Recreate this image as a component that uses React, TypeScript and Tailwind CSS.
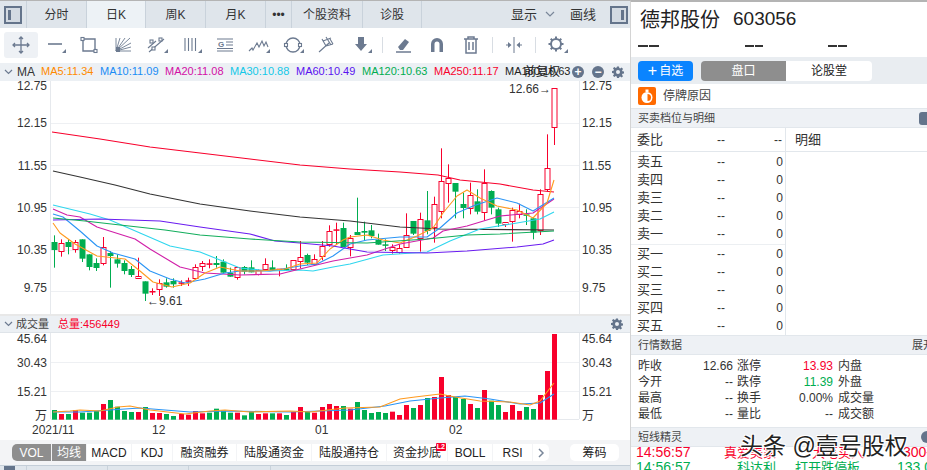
import type { ReactNode } from 'react';

type Kind = 'g' | 'h' | 'r';
type Candle = [number, number, number, number, Kind];

const RED = '#f8002c';
const GREEN = '#00ad50';

// high, body top, body bottom, low: first part read off the lower-left crop
const leftCandles: Candle[] = [
  [193, 213, 237, 290, 'g'], [205, 217, 242, 257, 'h'], [205, 213, 228, 250, 'g'], [207, 214, 236, 245, 'h'],
  [205, 205, 263, 273, 'g'], [250, 250, 288, 298, 'g'], [262, 276, 291, 300, 'g'], [198, 227, 275, 283, 'h'],
  [240, 246, 255, 350, 'g'], [250, 265, 278, 290, 'g'], [268, 276, 300, 310, 'g'], [285, 294, 312, 318, 'g'],
  [260, 316, 323, 323, 'h'], [331, 331, 368, 390, 'g'], [352, 360, 364, 372, 'r'], [325, 337, 356, 375, 'h'],
  [322, 334, 347, 350, 'g'], [322, 330, 340, 350, 'g'], [328, 334, 338, 345, 'r'], [320, 328, 332, 345, 'r'],
  [280, 289, 323, 323, 'h'], [270, 277, 287, 300, 'h'], [265, 277, 280, 292, 'r'], [255, 276, 282, 290, 'g'],
  [265, 272, 305, 305, 'g'], [290, 305, 317, 317, 'g'], [288, 289, 320, 326, 'h'], [285, 288, 302, 310, 'g'],
  [268, 289, 304, 304, 'g'], [295, 296, 307, 313, 'h'], [262, 280, 295, 300, 'h'], [268, 289, 297, 300, 'g'],
  [295, 293, 297, 316, 'r'], [280, 293, 297, 300, 'g'], [268, 268, 296, 296, 'h'],
];

const rightCandles: Candle[] = [
  [480, 528, 540, 562, 'h'], [518, 522, 545, 552, 'g'], [520, 533, 547, 552, 'h'], [480, 494, 524, 538, 'h'],
  [433, 451, 490, 497, 'h'], [425, 445, 449, 490, 'r'], [425, 441, 498, 498, 'g'], [462, 470, 497, 526, 'h'],
  [350, 453, 462, 462, 'g'], [422, 450, 455, 478, 'g'], [432, 448, 465, 472, 'g'], [458, 476, 491, 491, 'g'],
  [475, 490, 494, 510, 'g'], [490, 497, 507, 518, 'h'], [490, 501, 512, 518, 'h'], [397, 463, 500, 500, 'h'],
  [420, 420, 458, 462, 'g'], [395, 415, 473, 512, 'h'], [330, 418, 450, 460, 'g'], [347, 370, 440, 485, 'h'],
  [202, 301, 392, 412, 'h'], [250, 290, 305, 365, 'h'], [306, 306, 332, 412, 'g'], [335, 369, 381, 412, 'g'],
  [305, 343, 383, 400, 'h'], [325, 361, 392, 400, 'g'], [265, 306, 392, 418, 'h'], [328, 330, 380, 400, 'g'],
  [380, 385, 428, 438, 'g'], [424, 424, 430, 438, 'h'], [380, 388, 421, 482, 'h'], [368, 391, 400, 412, 'h'],
  [385, 400, 401, 432, 'g'], [412, 412, 455, 475, 'g'], [325, 338, 445, 462, 'h'], [160, 262, 326, 332, 'h'],
  [22, 22, 139, 192, 'h'],
];

const candles: Candle[] = [
  ...leftCandles.map((c): Candle => [170 + c[0] / 3, 170 + c[1] / 3, 170 + c[2] / 3, 170 + c[3] / 3, c[4]]),
  ...rightCandles.map((c): Candle => [80 + c[0] / 3, 80 + c[1] / 3, 80 + c[2] / 3, 80 + c[3] / 3, c[4]]),
];

const vols: [number, 'r' | 'g'][] = [
  [300, 'g'], [312, 'r'], [312, 'g'], [300, 'r'], [308, 'g'], [308, 'g'], [303, 'g'], [282, 'r'], [270, 'g'], [290, 'g'],
  [303, 'g'], [306, 'g'], [306, 'r'], [291, 'g'], [309, 'r'], [309, 'r'], [312, 'g'], [318, 'g'], [312, 'r'], [314, 'r'],
  [303, 'r'], [310, 'r'], [308, 'g'], [296, 'g'], [302, 'g'], [308, 'g'], [308, 'r'], [316, 'g'], [305, 'g'], [312, 'r'],
  [310, 'r'], [310, 'g'], [310, 'r'], [315, 'g'], [306, 'r'], [291, 'r'], [306, 'g'], [308, 'r'], [291, 'r'], [282, 'r'],
  [288, 'r'], [288, 'g'], [296, 'r'], [276, 'g'], [300, 'g'], [309, 'g'], [306, 'g'], [309, 'g'], [305, 'r'], [315, 'r'],
  [285, 'r'], [294, 'g'], [285, 'r'], [264, 'g'], [261, 'r'], [201, 'r'], [255, 'r'], [261, 'g'], [267, 'g'], [282, 'r'],
  [294, 'g'], [240, 'r'], [272, 'g'], [285, 'g'], [306, 'r'], [285, 'r'], [303, 'r'], [291, 'g'], [297, 'g'], [255, 'r'],
  [183, 'r'], [72, 'r'],
];

const maLines: { color: string; pts: string }[] = [
  { color: '#f8002c', pts: '52,131 100,138 150,146 200,152 250,158 300,164 350,168 400,171 438,174 460,179 500,183 533,189 554,191' },
  { color: '#333333', pts: '53,170 80,176 115,184 150,193 200,203 250,210 300,216 350,220 400,226 440,228 554,229' },
  { color: '#2fd6ee', pts: '53,204 90,213 110,219 140,232 170,245 200,251 220,259 240,267 270,270 300,269 313,270 333,266 350,263 383,254 427,251 450,240 480,228 517,222 540,218 554,211' },
  { color: '#d01fa8', pts: '53,208 67,214 80,216 97,226 135,238 150,248 170,260 180,266 205,272 240,274 280,273 300,268 333,260 367,254 400,243 433,237 443,230 467,225 500,215 533,212 554,198' },
  { color: '#2b95f5', pts: '53,213 63,216 80,230 97,245 113,252 135,258 150,270 170,278 185,282 205,278 225,272 240,270 270,270 300,265 317,263 333,255 350,243 367,239 400,236 427,236 440,227 457,212 473,205 497,197 517,202 533,210 554,197' },
  { color: '#ff9a1f', pts: '53,222 60,232 75,243 97,255 125,258 140,270 153,281 172,286 190,282 205,272 220,266 240,270 260,270 285,268 300,263 317,262 330,248 343,239 350,236 367,234 383,239 400,242 417,235 433,227 443,212 457,195 467,189 480,197 497,205 517,209 533,217 547,202 554,179' },
  { color: '#6a1cf0', pts: '53,219 100,218 160,220 200,226 250,233 275,240 300,242 333,245 367,251 427,252 467,250 517,246 543,243 554,239' },
  { color: '#12ad5c', pts: '53,217 85,220 120,224 165,229 200,234 250,238 300,241 367,242 427,238 467,234 500,233 554,230' },
];

const legend: [string, string, string][] = [
  ['MA5:11.34', 'text-[#ff8a00]', 'w-[59px]'],
  ['MA10:11.09', 'text-[#1a8cf5]', 'w-[65px]'],
  ['MA20:11.08', 'text-[#d30fa5]', 'w-[65px]'],
  ['MA30:10.88', 'text-[#12c8e8]', 'w-[66px]'],
  ['MA60:10.49', 'text-[#5a12f0]', 'w-[66px]'],
  ['MA120:10.63', 'text-[#00ad50]', 'w-[72px]'],
  ['MA250:11.17', 'text-[#f8002c]', 'w-[71px]'],
];

const cx = (i: number) => Math.round(53.6 + 7.05 * i) + 0.5;

function Chevron() {
  return (
    <svg width="9" height="6" viewBox="0 0 9 6" className="shrink-0">
      <path d="M1 1l3.5 3.5L8 1" fill="none" stroke="#6c7a90" strokeWidth="1.2" />
    </svg>
  );
}

function PanelIcon({ flip }: { flip?: boolean }) {
  return (
    <svg width="18" height="18" viewBox="0 0 18 18">
      <rect x="1" y="1" width="16" height="16" fill="#d3dae2" stroke="#64748b" strokeWidth="2" />
      <rect x={flip ? 11 : 4} y="4" width="3" height="10" fill="#64748b" />
    </svg>
  );
}

function Gear({ size = 13 }: { size?: number }) {
  return (
    <svg width={size} height={size} viewBox="0 0 24 24">
      <path
        fill="#64748b"
        fillRule="evenodd"
        d="M10 1h4l.6 3.2 2 .8L19.3 3l2.8 2.8-2 2.7.8 2 3.1.5v4l-3.2.6-.8 2 2 2.7-2.8 2.8-2.7-2-2 .8L14 24h-4l-.6-3.1-2-.8-2.7 2L1.900 19.300l2-2.700-.8-2L0 14v-4l3.100-.6.8-2-2-2.700L4.700 2l2.700 2 2-.8zM12 8a4 4 0 100 8 4 4 0 000-8z"
      />
    </svg>
  );
}

function Tool({ children, corner, active }: { children: ReactNode; corner?: boolean; active?: boolean }) {
  return (
    <div className={`flex h-[26px] w-[34px] shrink-0 items-center justify-center rounded-[3px] ${active ? 'bg-[#eef1f5]' : ''}`}>
      <svg width="30" height="22" viewBox="0 0 30 22" fill="none" stroke="#6c7a90" strokeWidth="1.1">
        {children}
        {corner && <path d="M26 19h-4l4-4z" fill="#6c7a90" stroke="none" />}
      </svg>
    </div>
  );
}

function Toolbar() {
  const sep = <div className="h-[16px] w-px shrink-0 bg-[#d8dde3]" />;
  return (
    <div className="flex h-[35px] items-center bg-white pl-1">
      <Tool active>
        <path d="M15 3v16M7 11h16M13 5l2-2 2 2M13 17l2 2 2-2M9 9l-2 2 2 2M21 9l2 2-2 2" strokeWidth="1.3" />
      </Tool>
      <Tool corner><path d="M8 10h14" strokeWidth="1.6" /></Tool>
      <Tool>
        <path d="M9 5v12h12V5z" strokeWidth="1.4" />
        <rect x="7" y="3.500" width="3" height="3" fill="#fff" />
        <rect x="20" y="15.500" width="3" height="3" fill="#fff" />
      </Tool>
      <Tool>
        <path d="M8 17L22 4M8 17l15-8M8 17l15-4M8 17h15M8 17L17 4M8 17L12 4M8 17V4" strokeWidth="0.9" />
        <path d="M8 13h4v5H8z" fill="#6c7a90" stroke="none" />
      </Tool>
      <Tool corner>
        <path d="M7 18L22 5M6 14L14 7" />
        <rect x="10" y="13" width="3" height="3" fill="#fff" />
        <rect x="17" y="4" width="3" height="3" fill="#fff" />
        <rect x="8" y="6" width="3" height="3" fill="#fff" />
      </Tool>
      <Tool corner>
        <path d="M9 4v13M12.500 4v13M16 4v13M19.500 4v13" />
      </Tool>
      <Tool>
        <path d="M7 5h16M7 17h16M7 14.500h16M16 8h7M16 11h7" />
        <text x="8" y="12.500" fontSize="8" fontWeight="700" fill="#6c7a90" stroke="none">G</text>
      </Tool>
      <Tool corner>
        <path d="M5 17l3-3 1 2 4-7 2 4 3-6 2 5 2-4 2 5" />
      </Tool>
      <Tool corner>
        <circle cx="15" cy="11" r="7" strokeWidth="1.3" />
        <rect x="6.500" y="9.500" width="3" height="3" fill="#fff" />
        <rect x="20.500" y="9.500" width="3" height="3" fill="#fff" />
      </Tool>
      <Tool>
        <path d="M7 18L17 9M10 5l4 7M14 3l5 8M18 5l3 5M11 7l8-3M14 12l7-2" />
      </Tool>
      <Tool corner>
        <path d="M12 3h6v7h3l-6 7-6-7h3z" fill="#6c7a90" stroke="none" />
      </Tool>
      <div className="ml-1 mr-[3px]">{sep}</div>
      <Tool>
        <path d="M10 13l7-8 4 3-6 8h-3z" fill="#6c7a90" stroke="none" />
        <path d="M8 18h15" strokeWidth="1.500" />
      </Tool>
      <Tool>
        <path d="M9 18v-8a6 6 0 0112 0v8h-3.500v-8a2.500 2.500 0 00-5 0v8z" fill="#6c7a90" stroke="none" />
      </Tool>
      <Tool>
        <path d="M8 5h14M12 5V3h6v2M10 5v14h10V5M13 8v8M17 8v8" strokeWidth="1.500" />
      </Tool>
      <div className="ml-1 mr-1">{sep}</div>
      <Tool>
        <path d="M15 3v16" strokeWidth="1" />
        <path d="M12.500 11L9 8v6zM17.500 11L21 8v6z" fill="#6c7a90" stroke="none" />
        <path d="M7 11h2M21 11h2" />
      </Tool>
      <div className="ml-1 mr-1">{sep}</div>
      <Tool corner>
        <circle cx="14" cy="10" r="5" strokeWidth="2" />
        <path d="M14 2.500v2.500M14 15v2.500M6.500 10H9M19 10h2.500M8.700 4.700l1.800 1.800M17.500 13.500l1.800 1.800M19.300 4.700l-1.800 1.800M10.500 13.500l-1.800 1.800" strokeWidth="2" />
      </Tool>
    </div>
  );
}

function TopTabs() {
  const tabs: [string, string, boolean?][] = [
    ['分时', 'w-[60px]'],
    ['日K', 'w-[59px]', true],
    ['周K', 'w-[60px]'],
    ['月K', 'w-[60px]'],
    ['•••', 'w-[26px]'],
    ['个股资料', 'w-[71px]'],
    ['诊股', 'w-[59px]'],
  ];
  return (
    <div className="flex h-[27px] items-stretch bg-[#dfe5eb] text-[12px] text-[#333]">
      <div className="flex w-[27px] shrink-0 items-center justify-center border-r border-[#c9d2db]">
        <PanelIcon />
      </div>
      {tabs.map(([label, w, on]) => (
        <div key={label} className={`flex shrink-0 items-center justify-center border-r border-[#c9d2db] ${w} ${on ? 'bg-[#edf2f6]' : ''}`}>
          {label}
        </div>
      ))}
      <div className="flex flex-1 items-center justify-end pr-[2px] text-[13px]">
        <span>显示</span>
        <svg width="10" height="7" viewBox="0 0 10 7" className="ml-[8px] mr-[15px]">
          <path d="M1 1l4 4 4-4" fill="none" stroke="#7a879a" strokeWidth="1.200" />
        </svg>
        <span className="mr-[14px]">画线</span>
        <PanelIcon flip />
      </div>
    </div>
  );
}

function PriceChart() {
  const grids: [number, string][] = [[122.5, '12.15'], [164.5, '11.55'], [206.5, '10.95'], [249.5, '10.35'], [290.5, '9.75']];
  const labelY: Record<string, number> = { '12.15': 126, '11.55': 169, '10.95': 211, '10.35': 253, '9.75': 291 };
  return (
    <svg width="630" height="233" viewBox="0 80 630 233" className="block overflow-visible" fontSize="12" fill="#333">
      {grids.map(([y]) => (
        <line key={y} x1="51" x2="579" y1={y} y2={y} stroke="#eef0f3" />
      ))}
      <line x1="50.500" x2="50.500" y1="80" y2="313" stroke="#e6e9ed" />
      <line x1="579.500" x2="579.500" y1="80" y2="313" stroke="#e6e9ed" />
      {[...grids.map(([, l]) => l), '12.75'].map((l) => {
        const y = l === '12.75' ? 89 : labelY[l];
        return (
          <g key={l}>
            <text x="47" y={y} textAnchor="end">{l}</text>
            <text x="582" y={y}>{l}</text>
          </g>
        );
      })}
      {candles.map(([hi, top, bot, lo, kind], i) => {
        const x = cx(i);
        const color = kind === 'g' ? GREEN : RED;
        return (
          <g key={i}>
            <line x1={x} x2={x} y1={hi} y2={lo} stroke={color} strokeWidth="1" />
            {kind === 'h' ? (
              <rect x={x - 2.5} y={Math.round(top) + 0.5} width="5" height={Math.max(1, Math.round(bot - top))} fill="#fff" stroke={color} />
            ) : (
              <rect x={x - 3} y={top} width="6" height={Math.max(1.5, bot - top)} fill={color} />
            )}
          </g>
        );
      })}
      {maLines.map((m) => (
        <polyline key={m.color} points={m.pts} fill="none" stroke={m.color} strokeWidth="1.100" strokeLinejoin="round" />
      ))}
      <text x="509" y="92">12.66→</text>
      <text x="147" y="304">←9.61</text>
    </svg>
  );
}

function VolumeChart() {
  const axis: [number, string, number][] = [[362.5, '30.43', 367], [391.5, '15.21', 396]];
  const fast = '53,412 70,411 80,410 100,411 118,407 130,406 150,410 185,414 210,411 225,410 250,412 290,411 310,412 345,408 380,407 400,399 415,397 440,394 455,397 480,401 510,402 530,405 540,401 554,383';
  const slow = '53,412 80,412 110,410 140,408 165,410 190,412 230,411 290,412 350,410 385,406 410,401 440,398 465,396 490,399 520,404 540,403 554,394';
  return (
    <svg width="630" height="107" viewBox="0 333 630 107" className="block overflow-visible" fontSize="12" fill="#333">
      {axis.map(([y]) => (
        <line key={y} x1="51" x2="579" y1={y} y2={y} stroke="#eef0f3" />
      ))}
      <line x1="50.500" x2="50.500" y1="333" y2="419" stroke="#e6e9ed" />
      <line x1="579.500" x2="579.500" y1="333" y2="419" stroke="#e6e9ed" />
      <line x1="51" x2="579" y1="419.500" y2="419.500" stroke="#e6e9ed" />
      {vols.map(([top, dir], i) => (
        <rect key={i} x={cx(i) - 2.5} y={310 + top / 3} width="5" height={(329 - top) / 3} fill={dir === 'r' ? RED : GREEN} />
      ))}
      <polyline points={slow} fill="none" stroke="#2b95f5" strokeWidth="1.100" />
      <polyline points={fast} fill="none" stroke="#ff9a1f" strokeWidth="1.100" />
      {[[343, '45.64'], ...axis.map((a) => [a[2], a[1]])].map(([y, l]) => (
        <g key={l as string}>
          <text x="47" y={y} textAnchor="end">{l}</text>
          <text x="582" y={y}>{l}</text>
        </g>
      ))}
      <text x="47" y="420" textAnchor="end">万</text>
      <text x="582" y="420">万</text>
      <text x="32" y="434">2021/11</text>
      <text x="152" y="434">12</text>
      <text x="315" y="434">01</text>
      <text x="449" y="434">02</text>
    </svg>
  );
}

function IndicatorTabs() {
  const tabs: [string, string][] = [
    ['MACD', 'w-[44px]'], ['KDJ', 'w-[40px]'], ['融资融券', 'w-[63px]'], ['陆股通资金', 'w-[74px]'], ['陆股通持仓', 'w-[74px]'],
  ];
  return (
    <div className="flex h-[25px] items-start bg-[#f3f4f6] pl-3 pt-[4px] text-[12px] text-[#222]">
      <div className="flex h-[17px] w-[39px] items-center justify-center rounded-l-[5px] bg-[#8e8e8e] text-white">VOL</div>
      <div className="ml-px flex h-[17px] w-[34px] items-center justify-center bg-[#8e8e8e] text-white">均线</div>
      {tabs.map(([t, w]) => (
        <div key={t} className={`ml-px flex h-[17px] items-center justify-center bg-white ${w}`}>{t}</div>
      ))}
      <div className="relative ml-px flex h-[17px] w-[60px] items-center justify-center bg-white">
        资金抄底
        <span className="absolute right-[1px] top-[-1px] h-[8px] rounded-[1px] bg-[#f8002c] px-[1px] text-[7px] font-bold leading-[8px] text-white">L2</span>
      </div>
      <div className="ml-px flex h-[17px] w-[44px] items-center justify-center bg-white">BOLL</div>
      <div className="ml-px flex h-[17px] w-[39px] items-center justify-center bg-white">RSI</div>
      <div className="ml-px flex h-[17px] w-[16px] items-center justify-center rounded-r-[5px] bg-white">
        <svg width="7" height="10" viewBox="0 0 7 10"><path d="M1 1l4 4-4 4" fill="none" stroke="#7a879a" strokeWidth="1.500" /></svg>
      </div>
      <div className="ml-[21px] flex h-[17px] w-[49px] items-center justify-center rounded-[5px] bg-white">筹码</div>
    </div>
  );
}

function BottomStrip() {
  return (
    <div className="flex h-[5px] items-stretch overflow-hidden border-t border-[#c4ced8] bg-[#e0e6ec]">
      <div className="w-[27px] border-r border-[#c9d2db] pl-1"><div className="h-full w-[11px] bg-[#64748b]" /></div>
      <div className="w-[81px] border-r border-[#c9d2db]" />
      <div className="w-[81px] border-r border-[#c9d2db]" />
      <div className="w-[82px] border-r border-[#c9d2db]" />
    </div>
  );
}

function LeftPane() {
  return (
    <div className="flex w-[630px] shrink-0 flex-col border-t-2 border-[#b4b4b4]">
      <div className="-mt-[1px]"><TopTabs /></div>
      <Toolbar />
      <div className="flex h-[18px] items-center bg-[#ecf0f4] pl-[4px] text-[11px]">
        <Chevron />
        <span className="ml-[4px] w-[24px] text-[12px] text-[#333]">MA</span>
        {legend.map(([t, color, w]) => (
          <span key={t} className={`shrink-0 ${color} ${w}`}>{t}</span>
        ))}
        <span className="relative w-[66px] shrink-0 text-[#222]">
          MA180:10.63
          <span className="absolute left-[19px] top-0 text-[12px]">前复权</span>
        </span>
        <span className="ml-[1px] flex items-center gap-[8px]">
          <span className="flex h-[12px] w-[12px] items-center justify-center rounded-full bg-[#64748b] text-[12px] font-bold leading-none text-white">+</span>
          <span className="flex h-[12px] w-[12px] items-center justify-center rounded-full bg-[#64748b] text-[12px] font-bold leading-none text-white">−</span>
          <Gear size={12} />
        </span>
      </div>
      <PriceChart />
      <div className="h-[2px] bg-[#e8e8e8]" />
      <div className="flex h-[18px] items-center border-b border-[#dfe4e9] bg-[#ecf0f4] pl-[4px] text-[11px]">
        <Chevron />
        <span className="ml-[3px] text-[#444]">成交量</span>
        <span className="ml-[9px] text-[#f8002c]">总量:456449</span>
        <span className="ml-auto mr-[7px]"><Gear size={12} /></span>
      </div>
      <VolumeChart />
      <IndicatorTabs />
      <BottomStrip />
    </div>
  );
}

function SectionHead({ title, right }: { title: string; right?: ReactNode }) {
  return (
    <div className="flex h-[20px] shrink-0 items-center justify-between border-y border-[#e2e7ec] bg-[#eef1f5] pl-[7px] text-[11px] text-[#444]">
      <span>{title}</span>
      {right}
    </div>
  );
}

function OrderRow({ label }: { label: string }) {
  return (
    <div className="flex h-[18px] items-center pl-[6px] text-[13px] text-[#333]">
      <span className="w-[74px]">{label}</span>
      <span className="w-[14px] text-right text-[12px]">--</span>
      <span className="w-[58px] text-right text-[12px]">0</span>
    </div>
  );
}

function Quote({ a, b, bColor, c, d }: { a: string; b: string; bColor?: string; c: string; d: string }) {
  return (
    <div className="flex h-[16px] items-center pl-[7px] text-[12px] text-[#333]">
      <span className="w-[30px]">{a}</span>
      <span className="w-[65px] text-right">{b}</span>
      <span className="ml-[4px] w-[30px]">{c}</span>
      <span className={`w-[66px] text-right ${bColor ?? ''}`}>{d}</span>
    </div>
  );
}

function Dashes() {
  return (
    <span className="flex gap-[1px]">
      <span className="h-[2px] flex-1 bg-[#333]" />
      <span className="h-[2px] flex-1 bg-[#333]" />
    </span>
  );
}

function RightPane() {
  return (
    <div className="flex min-w-0 flex-1 flex-col overflow-hidden border-l border-t-2 border-[#d4d4d4] border-t-[#b4b4b4] bg-white text-[#333]">
      <div className="flex h-[32px] shrink-0 items-center pl-[9px] pt-[3px] text-[#222]">
        <span className="text-[20px]">德邦股份</span>
        <span className="ml-[13px] text-[19px]">603056</span>
      </div>
      <div className="flex h-[23px] shrink-0 items-start pl-[7px] pt-[11px]">
        <span className="w-[21px]"><Dashes /></span>
        <span className="ml-[86px] w-[18px]"><Dashes /></span>
        <span className="ml-[65px] w-[19px]"><Dashes /></span>
      </div>
      <div className="flex h-[27px] shrink-0 items-center bg-[#e9edf1] pl-[7px] text-[12px]">
        <div className="flex h-[20px] w-[55px] items-center justify-center rounded-[4px] bg-[#0a84ff] text-white">
          <span className="mr-[2px] text-[16px] font-light leading-none">+</span>自选
        </div>
        <div className="ml-[8px] flex h-[20px] w-[85px] items-center justify-center rounded-l-[4px] bg-[#8e8e8e] text-white">盘口</div>
        <div className="flex h-[20px] w-[86px] items-center justify-center rounded-r-[4px] bg-white text-[#222]">论股堂</div>
      </div>
      <div className="flex h-[24px] shrink-0 items-center pl-[7px] text-[12px] text-[#444]">
        <svg width="18" height="18" viewBox="0 0 18 18">
          <rect width="18" height="18" rx="2" fill="#ff6a00" />
          <circle cx="9" cy="10.500" r="5.500" fill="#fff" />
          <path d="M9.500 7v7a3.500 3.500 0 000-7z" fill="#ff6a00" />
          <rect x="7.500" y="2.500" width="3" height="2.500" fill="#fff" />
        </svg>
        <span className="ml-[7px]">停牌原因</span>
      </div>
      <SectionHead
        title="买卖档位与明细"
        right={<span className="h-[13px] w-[8px] shrink-0 rounded-l-[3px] bg-[#64748b]" />}
      />
      <div className="flex shrink-0">
        <div className="w-[155px] shrink-0 border-r border-[#e2e7ec]">
          <div className="flex h-[24px] items-center border-b border-[#e2e7ec] pl-[6px] text-[13px]">
            <span className="w-[76px]">委比</span>
            <span className="w-[12px] text-right text-[12px]">--</span>
            <span className="w-[57px] text-right text-[12px]">--</span>
          </div>
          <div className="border-b border-[#eceff2] pb-[1px] pt-px">
            {['卖五', '卖四', '卖三', '卖二', '卖一'].map((l) => <OrderRow key={l} label={l} />)}
          </div>
          <div>
            {['买一', '买二', '买三', '买四', '买五'].map((l) => <OrderRow key={l} label={l} />)}
          </div>
        </div>
        <div className="flex h-[24px] flex-1 items-center border-b border-[#e2e7ec] pl-[9px] text-[13px]">明细</div>
      </div>
      <SectionHead title="行情数据" right={<span className="-mr-[7px] shrink-0 text-[11px]">展开</span>} />
      <div className="h-[72px] shrink-0 pt-[3px]">
        <Quote a="昨收" b="12.66" c="涨停" d="13.93" bColor="text-[#f8002c]" />
        <Quote a="今开" b="--" c="跌停" d="11.39" bColor="text-[#00ad50]" />
        <Quote a="最高" b="--" c="换手" d="0.00%" />
        <Quote a="最低" b="--" c="量比" d="--" />
      </div>
      <SectionHead
        title="短线精灵"
        right={<span className="-mr-[6px] h-[12px] w-[12px] shrink-0 rounded-full bg-[#64748b]" />}
      />
    </div>
  );
}

export default function App() {
  return (
    <div className="relative flex h-[470px] w-[927px] overflow-hidden bg-white font-['Liberation_Sans','Noto_Sans_CJK_SC',sans-serif]">
      <LeftPane />
      <RightPane />
      {/* the third column of the quote table and the ticker run past the window edge */}
      <div className="absolute left-[838px] top-[358px] text-[12px] leading-[16px] text-[#333]">
        <div>内盘</div><div>外盘</div><div>成交量</div><div>成交额</div>
      </div>
      <div className="absolute left-[636px] top-[445px] w-[300px] text-[13px] leading-[15px]">
        <div className="flex text-[#f8002c]">
          <span className="w-[88px] text-[14px]">14:56:57</span><span className="w-[88px]">真爱美家</span><span className="w-[91px]">大笔买入</span><span className="text-[14px]">300-</span>
        </div>
        <div className="flex text-[#00ad50]">
          <span className="w-[101px] text-[14px]">14:56:57</span><span className="w-[58px]">科达利</span><span className="w-[102px]">打开跌停板</span><span className="text-[14px]">133.0</span>
        </div>
      </div>
      <div className="absolute left-[740px] top-[431px] text-[23px] leading-[30px] text-[#222] [text-shadow:1px_1px_0_#fff,-1px_-1px_0_#fff,1px_-1px_0_#fff,-1px_1px_0_#fff]">
        头条 @壹号股权
      </div>
    </div>
  );
}
